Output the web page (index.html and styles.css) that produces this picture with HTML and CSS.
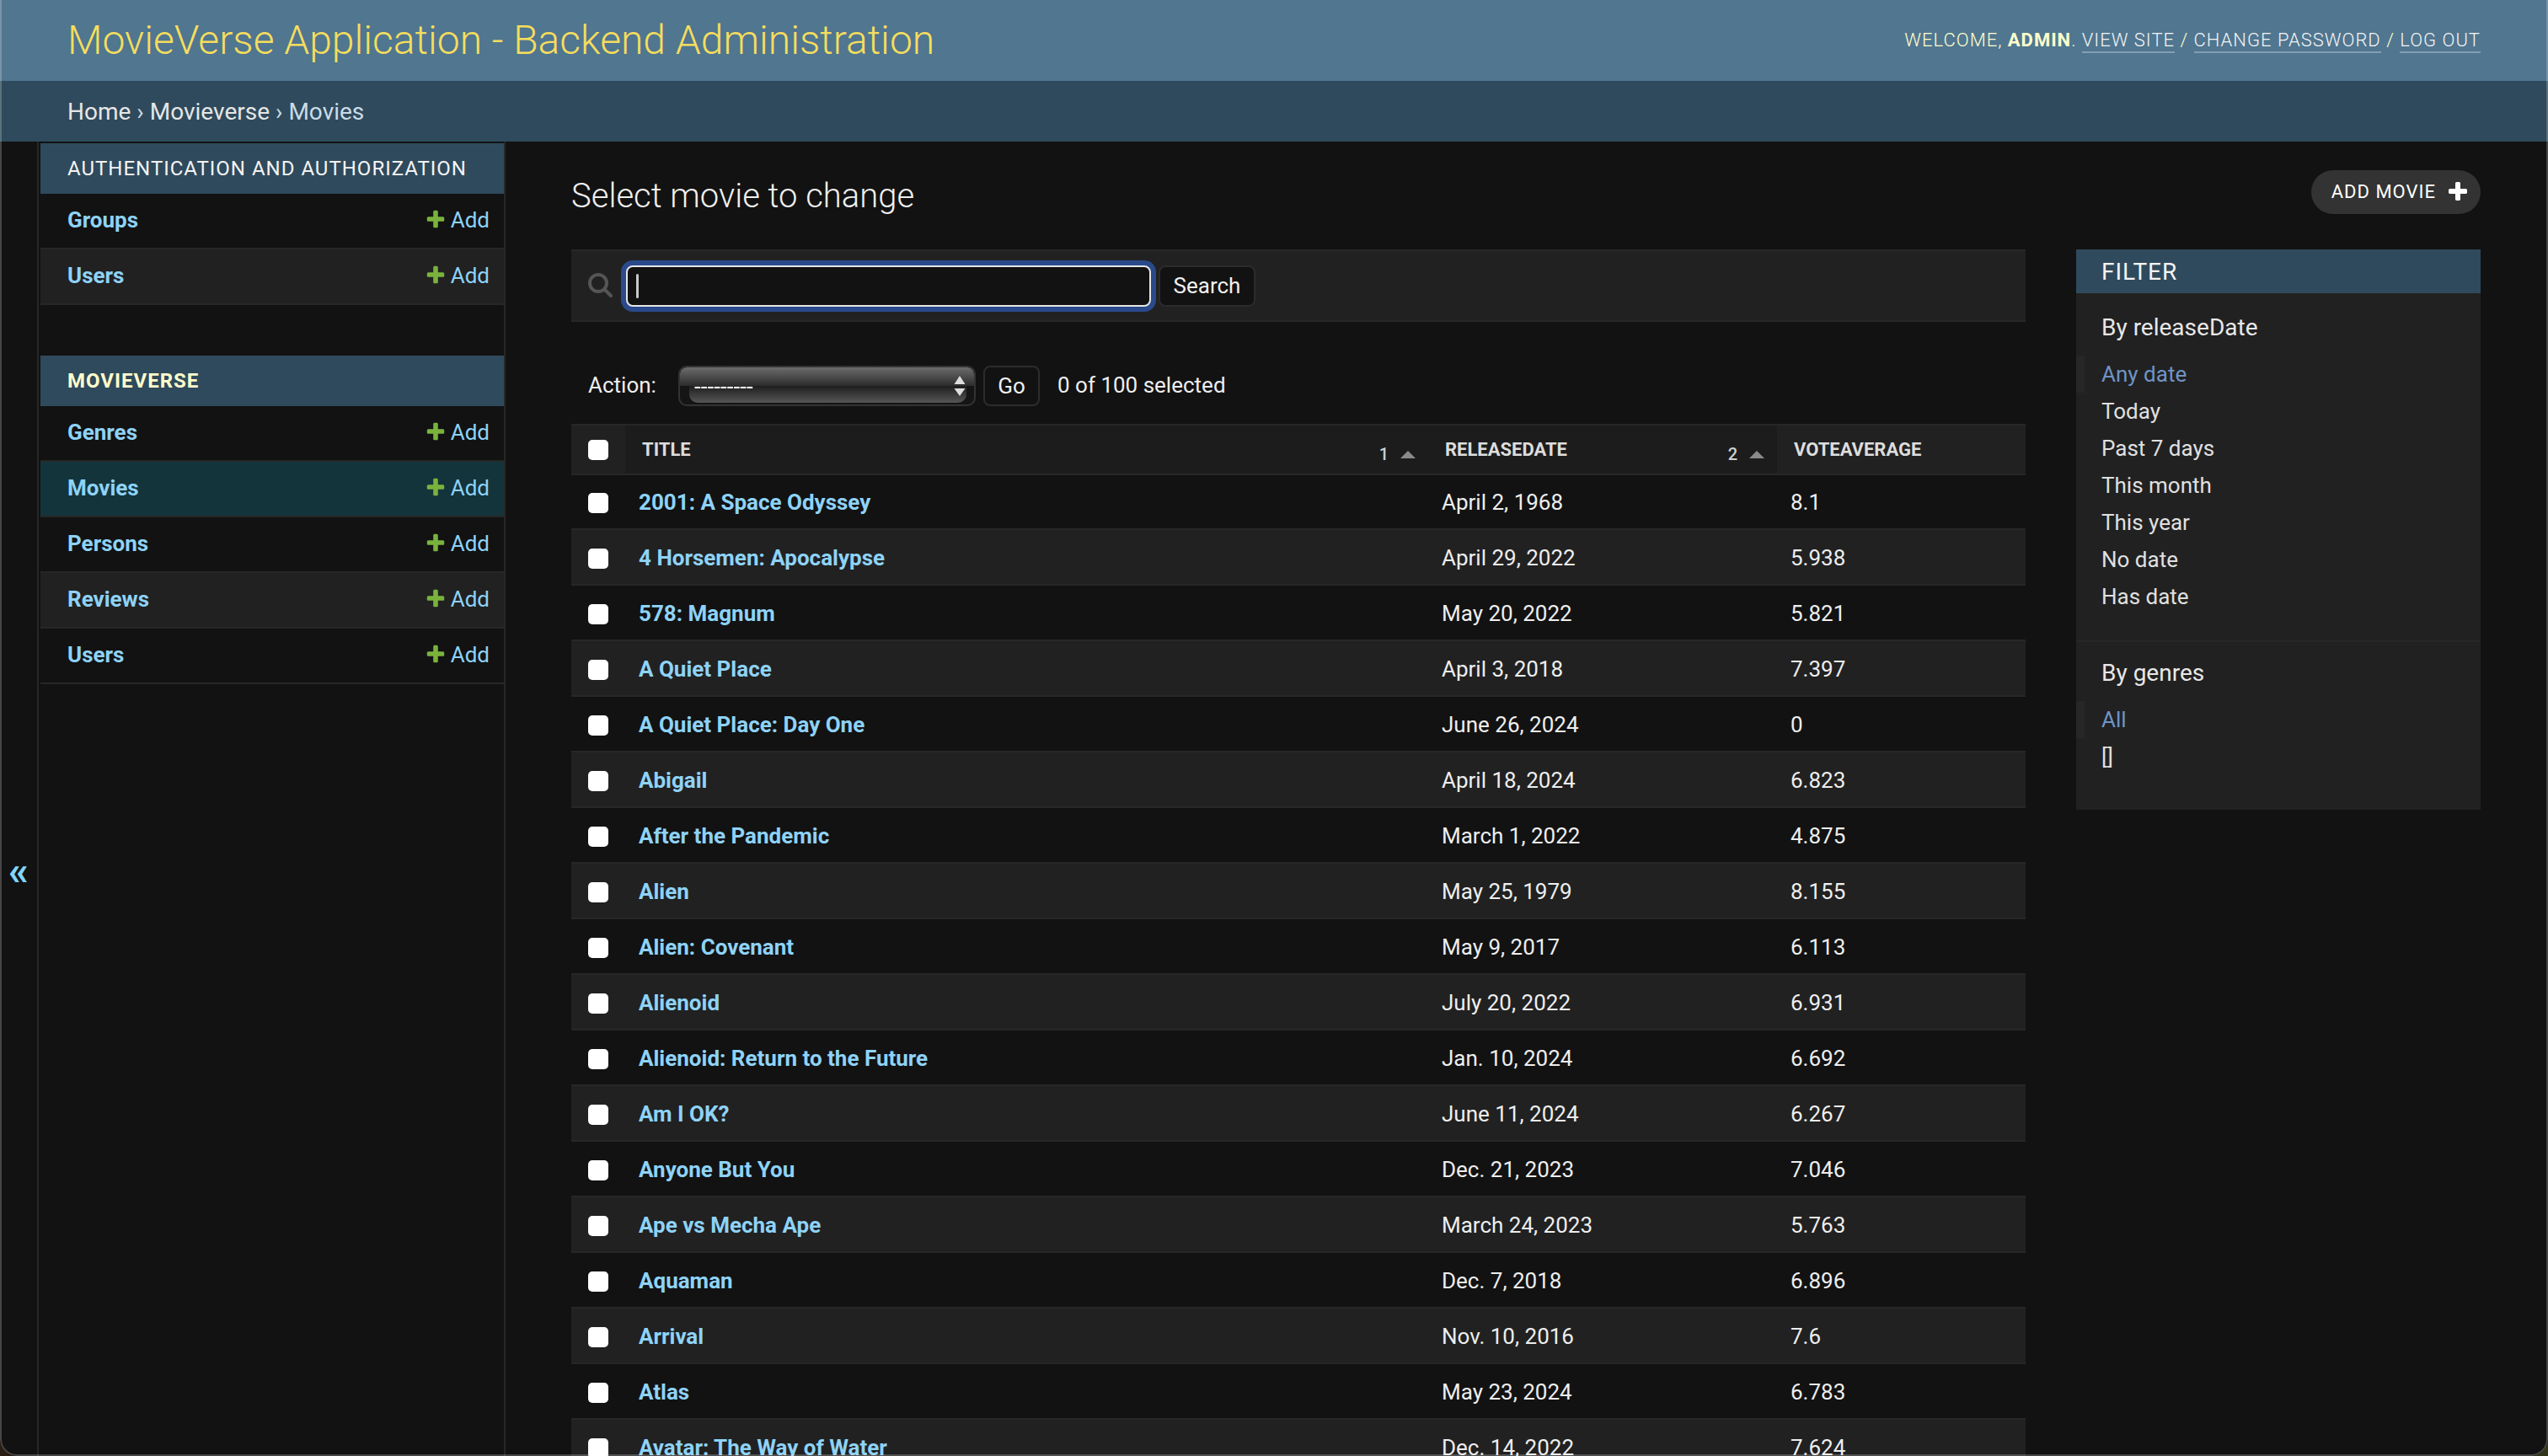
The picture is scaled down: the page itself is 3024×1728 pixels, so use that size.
FILE: index.html
```html
<!DOCTYPE html>
<html lang="en">
<head>
<meta charset="utf-8">
<title>Select movie to change | MovieVerse Application - Backend Administration</title>
<link rel="stylesheet" href="styles.css">
</head>
<body>
<svg class="defs" width="0" height="0" aria-hidden="true">
  <symbol id="plus" viewBox="0 0 1792 1792"><path d="M1600 736v192q0 40-28 68t-68 28h-416v416q0 40-28 68t-68 28h-192q-40 0-68-28t-28-68v-416h-416q-40 0-68-28t-28-68v-192q0-40 28-68t68-28h416v-416q0-40 28-68t68-28h192q40 0 68 28t28 68v416h416q40 0 68 28t28 68z"/></symbol>
</svg>
<header class="site-header">
  <h1 class="brand">MovieVerse Application - Backend Administration</h1>
  <div class="user-tools">WELCOME, <strong>ADMIN</strong>. <a href="#">VIEW SITE</a> / <a href="#">CHANGE PASSWORD</a> / <a href="#">LOG OUT</a></div>
</header>
<nav class="breadcrumbs"><a href="#">Home</a> › <a href="#">Movieverse</a> › Movies</nav>
<div class="page">
  <button class="nav-toggle" type="button">«</button>
  <aside class="sidebar">
    <section class="module">
      <h2 class="caption">AUTHENTICATION AND AUTHORIZATION</h2>
      <div class="nav-row"><a class="nav-name" href="#">Groups</a><a class="nav-add" href="#"><svg class="plus-icon"><use href="#plus"/></svg>Add</a></div>
      <div class="nav-row alt"><a class="nav-name" href="#">Users</a><a class="nav-add" href="#"><svg class="plus-icon"><use href="#plus"/></svg>Add</a></div>
    </section>
    <section class="module">
      <h2 class="caption current">MOVIEVERSE</h2>
      <div class="nav-row"><a class="nav-name" href="#">Genres</a><a class="nav-add" href="#"><svg class="plus-icon"><use href="#plus"/></svg>Add</a></div>
      <div class="nav-row selected"><a class="nav-name" href="#">Movies</a><a class="nav-add" href="#"><svg class="plus-icon"><use href="#plus"/></svg>Add</a></div>
      <div class="nav-row"><a class="nav-name" href="#">Persons</a><a class="nav-add" href="#"><svg class="plus-icon"><use href="#plus"/></svg>Add</a></div>
      <div class="nav-row alt"><a class="nav-name" href="#">Reviews</a><a class="nav-add" href="#"><svg class="plus-icon"><use href="#plus"/></svg>Add</a></div>
      <div class="nav-row"><a class="nav-name" href="#">Users</a><a class="nav-add" href="#"><svg class="plus-icon"><use href="#plus"/></svg>Add</a></div>
    </section>
  </aside>
  <main class="content">
    <div class="content-head">
      <h1 class="page-title">Select movie to change</h1>
      <a class="add-button" href="#">ADD MOVIE<svg class="add-button-icon"><use href="#plus"/></svg></a>
    </div>
    <div class="columns">
      <div class="results">
        <form class="toolbar">
          <svg class="search-icon" viewBox="0 0 30 30"><circle cx="12" cy="12" r="10"/><line x1="20" y1="20" x2="27" y2="27"/></svg>
          <div class="search-field"><span class="caret"></span></div>
          <button class="btn search-btn" type="button">Search</button>
        </form>
        <div class="actions">
          <label class="action-label">Action:</label>
          <div class="select-wrap">
            <select class="action-select"><option>---------</option></select>
            <svg class="select-arrows" viewBox="0 0 14 24"><path d="M7 0l6.5 10H.5zM7 24L.5 15h13z"/></svg>
          </div>
          <button class="btn go-btn" type="button">Go</button>
          <span class="counter">0 of 100 selected</span>
        </div>
        <table class="movies">
          <colgroup><col class="c-check"><col class="c-title"><col class="c-date"><col class="c-vote"></colgroup>
          <thead>
            <tr>
              <th class="check-cell"><input type="checkbox" class="box"></th>
              <th class="sorted"><div class="th-inner"><span>TITLE</span><span class="sort"><span class="sort-num">1</span><span class="sort-tri"></span></span></div></th>
              <th class="sorted"><div class="th-inner"><span>RELEASEDATE</span><span class="sort"><span class="sort-num">2</span><span class="sort-tri"></span></span></div></th>
              <th><div class="th-inner"><span>VOTEAVERAGE</span></div></th>
            </tr>
          </thead>
          <tbody>
            <tr><td class="check-cell"><input type="checkbox" class="box"></td><td><a href="#">2001: A Space Odyssey</a></td><td>April 2, 1968</td><td>8.1</td></tr>
            <tr><td class="check-cell"><input type="checkbox" class="box"></td><td><a href="#">4 Horsemen: Apocalypse</a></td><td>April 29, 2022</td><td>5.938</td></tr>
            <tr><td class="check-cell"><input type="checkbox" class="box"></td><td><a href="#">578: Magnum</a></td><td>May 20, 2022</td><td>5.821</td></tr>
            <tr><td class="check-cell"><input type="checkbox" class="box"></td><td><a href="#">A Quiet Place</a></td><td>April 3, 2018</td><td>7.397</td></tr>
            <tr><td class="check-cell"><input type="checkbox" class="box"></td><td><a href="#">A Quiet Place: Day One</a></td><td>June 26, 2024</td><td>0</td></tr>
            <tr><td class="check-cell"><input type="checkbox" class="box"></td><td><a href="#">Abigail</a></td><td>April 18, 2024</td><td>6.823</td></tr>
            <tr><td class="check-cell"><input type="checkbox" class="box"></td><td><a href="#">After the Pandemic</a></td><td>March 1, 2022</td><td>4.875</td></tr>
            <tr><td class="check-cell"><input type="checkbox" class="box"></td><td><a href="#">Alien</a></td><td>May 25, 1979</td><td>8.155</td></tr>
            <tr><td class="check-cell"><input type="checkbox" class="box"></td><td><a href="#">Alien: Covenant</a></td><td>May 9, 2017</td><td>6.113</td></tr>
            <tr><td class="check-cell"><input type="checkbox" class="box"></td><td><a href="#">Alienoid</a></td><td>July 20, 2022</td><td>6.931</td></tr>
            <tr><td class="check-cell"><input type="checkbox" class="box"></td><td><a href="#">Alienoid: Return to the Future</a></td><td>Jan. 10, 2024</td><td>6.692</td></tr>
            <tr><td class="check-cell"><input type="checkbox" class="box"></td><td><a href="#">Am I OK?</a></td><td>June 11, 2024</td><td>6.267</td></tr>
            <tr><td class="check-cell"><input type="checkbox" class="box"></td><td><a href="#">Anyone But You</a></td><td>Dec. 21, 2023</td><td>7.046</td></tr>
            <tr><td class="check-cell"><input type="checkbox" class="box"></td><td><a href="#">Ape vs Mecha Ape</a></td><td>March 24, 2023</td><td>5.763</td></tr>
            <tr><td class="check-cell"><input type="checkbox" class="box"></td><td><a href="#">Aquaman</a></td><td>Dec. 7, 2018</td><td>6.896</td></tr>
            <tr><td class="check-cell"><input type="checkbox" class="box"></td><td><a href="#">Arrival</a></td><td>Nov. 10, 2016</td><td>7.6</td></tr>
            <tr><td class="check-cell"><input type="checkbox" class="box"></td><td><a href="#">Atlas</a></td><td>May 23, 2024</td><td>6.783</td></tr>
            <tr><td class="check-cell"><input type="checkbox" class="box"></td><td><a href="#">Avatar: The Way of Water</a></td><td>Dec. 14, 2022</td><td>7.624</td></tr>
          </tbody>
        </table>
      </div>
      <aside class="filter">
        <h2 class="filter-title">FILTER</h2>
        <div class="filter-group">
          <h3 class="filter-head">By releaseDate</h3>
          <ul class="filter-list">
            <li class="on"><a href="#">Any date</a></li>
            <li><a href="#">Today</a></li>
            <li><a href="#">Past 7 days</a></li>
            <li><a href="#">This month</a></li>
            <li><a href="#">This year</a></li>
            <li><a href="#">No date</a></li>
            <li><a href="#">Has date</a></li>
          </ul>
        </div>
        <div class="filter-group last">
          <h3 class="filter-head">By genres</h3>
          <ul class="filter-list">
            <li class="on"><a href="#">All</a></li>
            <li><a href="#">[]</a></li>
          </ul>
        </div>
      </aside>
    </div>
  </main>
</div>
<div class="window-frame"></div>
</body>
</html>
```

FILE: styles.css
```css
* { box-sizing: border-box; }
html, body { height: 100%; margin: 0; overflow: hidden; }
body {
  display: flex;
  flex-direction: column;
  background: #121212;
  color: #eeeeee;
  font-family: Roboto, "Liberation Sans", sans-serif;
  font-size: 26px;
}
a { color: inherit; text-decoration: none; }
h1, h2, h3, ul { margin: 0; padding: 0; }
.defs { position: absolute; }

/* header */
.site-header {
  flex: none;
  height: 96px;
  padding: 0 80px 2px;
  display: flex;
  align-items: center;
  justify-content: space-between;
  background: #507690;
}
.brand { font-size: 48px; font-weight: 300; color: #f5dd5d; }
.user-tools { font-size: 22px; font-weight: 300; letter-spacing: 1px; color: #ffffcc; }
.user-tools strong { font-weight: 700; }
.user-tools a { color: #f4f4f4; border-bottom: 2px solid rgba(255,255,255,.3); padding-bottom: 1px; }
.breadcrumbs {
  flex: none;
  height: 72px;
  padding: 0 80px;
  display: flex;
  align-items: center;
  gap: 7px;
  background: #2f4a5c;
  color: #c9dce8;
  font-size: 28px;
  font-weight: 400;
}
.breadcrumbs a { color: #e6e6e6; }

/* page */
.page { flex: 1; min-height: 0; display: flex; }
.nav-toggle {
  flex: none;
  width: 46px;
  padding: 170px 0 0;
  background: #121212;
  border: 0;
  border-right: 2px solid #272727;
  color: #81d4fa;
  font: 700 48px Roboto, sans-serif;
}
.sidebar {
  flex: none;
  width: 552px;
  margin-left: 2px;
  padding-top: 2px;
  border-right: 2px solid #272727;
  display: flex;
  flex-direction: column;
  gap: 60px;
}
.caption {
  height: 60px;
  padding: 0 32px;
  display: flex;
  align-items: center;
  background: #2f4a5c;
  color: #f4f4f4;
  font-size: 24px;
  font-weight: 400;
  letter-spacing: 1px;
}
.caption.current { color: #ffffcc; font-weight: 700; }
.nav-row {
  height: 66px;
  padding: 0 17px 2px 32px;
  display: flex;
  align-items: center;
  justify-content: space-between;
  border-bottom: 2px solid #272727;
}
.nav-row.alt { background: #212121; }
.nav-row.selected { background: #14343b; }
.nav-name { color: #8ed3f8; font-weight: 700; }
.nav-add { display: flex; align-items: center; gap: 5px; color: #8ed3f8; }
.plus-icon { width: 26px; height: 26px; fill: #7ab33c; }

/* content */
.content { flex: 1; min-width: 0; padding: 34px 80px 0 78px; }
.content-head {
  height: 94px;
  display: flex;
  align-items: flex-start;
  justify-content: space-between;
}
.page-title { padding-top: 7px; font-size: 40px; font-weight: 300; line-height: 48px; color: #f0f0f0; }
.add-button {
  height: 52px;
  padding: 0 13px 1px 24px;
  display: flex;
  align-items: center;
  gap: 12px;
  border-radius: 26px;
  background: #333333;
  color: #ffffff;
  font-size: 22px;
  font-weight: 400;
  letter-spacing: 1px;
}
.add-button-icon { width: 28px; height: 28px; fill: #ffffff; }
.columns { display: flex; gap: 60px; align-items: flex-start; }
.results { width: 1726px; flex: none; }

/* search */
.toolbar {
  height: 86px;
  padding-left: 20px;
  display: flex;
  align-items: center;
  background: #212121;
  border-top: 2px solid #272727;
  border-bottom: 2px solid #272727;
}
.search-icon { width: 30px; height: 30px; fill: none; stroke: #555555; stroke-width: 4; stroke-linecap: round; }
.search-field {
  width: 623px;
  height: 49px;
  margin-left: 15px;
  padding: 8px 10px;
  background: #121212;
  border: 2px solid #e6e6e6;
  border-radius: 8px;
  box-shadow: 0 0 0 6px #2a4a8c;
}
.caret { display: block; width: 3px; height: 29px; border-radius: 2px; background: #c8c8c8; }
.btn {
  height: 49px;
  background: #121212;
  border: 2px solid #2c2c2c;
  border-radius: 8px;
  color: #f0f0f0;
  font: 400 26px Roboto, sans-serif;
}
.search-btn { width: 115px; margin-left: 9px; padding: 0; }

/* actions */
.actions {
  margin-top: 52px;
  height: 48px;
  padding-left: 20px;
  display: flex;
  align-items: center;
}
.action-label { width: 107px; padding-bottom: 2px; }
.select-wrap {
  position: relative;
  width: 353px;
  height: 48px;
  overflow: hidden;
  background: #151515;
  border: 2px solid #333333;
  border-radius: 10px;
}
.select-wrap::before {
  content: "";
  position: absolute;
  inset: 0 0 22px 0;
  background: linear-gradient(#6c6c6c, #2c2c2c);
  border-radius: 8px 8px 0 0;
}
.select-wrap::after {
  content: "";
  position: absolute;
  left: 11px;
  right: 9px;
  top: 22px;
  bottom: 2px;
  background: linear-gradient(#1e1e1e, #565656);
  border-radius: 0 0 10px 10px;
}
.action-select {
  position: relative;
  z-index: 1;
  display: block;
  width: 100%;
  height: 44px;
  padding: 0 0 0 17px;
  appearance: none;
  background: transparent;
  border: 0;
  color: #f4f4f4;
  font: 400 28px Roboto, sans-serif;
}
.select-arrows {
  position: absolute;
  z-index: 2;
  right: 10px;
  top: 10px;
  width: 14px;
  height: 24px;
  fill: #dddddd;
}
.go-btn { width: 67px; height: 48px; margin-left: 9px; padding: 0; }
.counter { margin-left: 21px; padding-bottom: 2px; }

/* table */
.movies {
  margin-top: 21px;
  width: 100%;
  table-layout: fixed;
  border-collapse: separate;
  border-spacing: 0;
}
.c-check { width: 64px; }
.c-title { width: 953px; }
.c-date { width: 414px; }
.c-vote { width: 295px; }
.movies th {
  height: 61px;
  padding: 0 0 0 20px;
  background: #212121;
  border-top: 2px solid #272727;
  border-bottom: 2px solid #272727;
  color: #dddddd;
  font-size: 22px;
  font-weight: 700;
  text-align: left;
}
.movies th.sorted { background: #1c1c1c; }
.movies th.check-cell { padding: 0 0 0 20px; }
.movies td.check-cell { padding: 3px 0 0 20px; }
.th-inner { display: flex; align-items: center; justify-content: space-between; padding-right: 15px; }
.sort { display: flex; align-items: center; gap: 14px; padding-top: 10px; }
.sort-num { font-size: 20px; font-weight: 500; color: #d0d0d0; }
.sort-tri { width: 0; height: 0; margin-top: 2px; border: 9px solid transparent; border-top: 0; border-bottom: 9px solid #8a8a8a; }
.movies td {
  height: 66px;
  padding: 1px 0 0 16px;
  border-bottom: 2px solid #272727;
  color: #eeeeee;
}
.movies tbody tr:first-child td { height: 65px; }
.movies tbody tr:nth-child(even) td { background: #212121; }
.movies td a { color: #8ed3f8; font-weight: 700; }
.box {
  display: block;
  width: 24px;
  height: 24px;
  margin: 0;
  appearance: none;
  background: #ffffff;
  border-radius: 5px;
}

/* filter */
.filter { flex: none; width: 480px; background: #212121; }
.filter-title {
  height: 52px;
  padding: 0 30px;
  display: flex;
  align-items: center;
  background: #2f4a5c;
  color: #f4f4f4;
  font-size: 28px;
  font-weight: 400;
  letter-spacing: 1px;
}
.filter-group { padding: 20px 0 30px; border-bottom: 2px solid #272727; }
.filter-group.last { padding: 16px 0 41px; border-bottom: 0; }
.filter-head { padding-left: 30px; height: 40px; font-size: 28px; line-height: 41px; font-weight: 400; color: #e8e8e8; }
.filter-list { margin-top: 14px; list-style: none; }
.filter-list li {
  height: 44px;
  padding-left: 30px;
  display: flex;
  align-items: center;
  color: #e0e0e0;
}
.filter-list li.on {
  padding-left: 20px;
  border-left: 10px solid #272727;
  color: #6f94c6;
}

/* window edge */
.window-frame {
  position: fixed;
  inset: 0;
  pointer-events: none;
  border: 2px solid rgba(255,255,255,.22);
  border-top: 0;
  border-radius: 0 0 20px 20px;
}
.window-frame::before,
.window-frame::after {
  content: "";
  position: absolute;
  bottom: -2px;
  width: 20px;
  height: 20px;
}
.window-frame::before {
  left: -2px;
  background: radial-gradient(circle at 100% 0, transparent 19.5px, #2a1e12 20.5px);
}
.window-frame::after {
  right: -2px;
  background: radial-gradient(circle at 0 0, transparent 19.5px, #33351a 20.5px);
}
```
